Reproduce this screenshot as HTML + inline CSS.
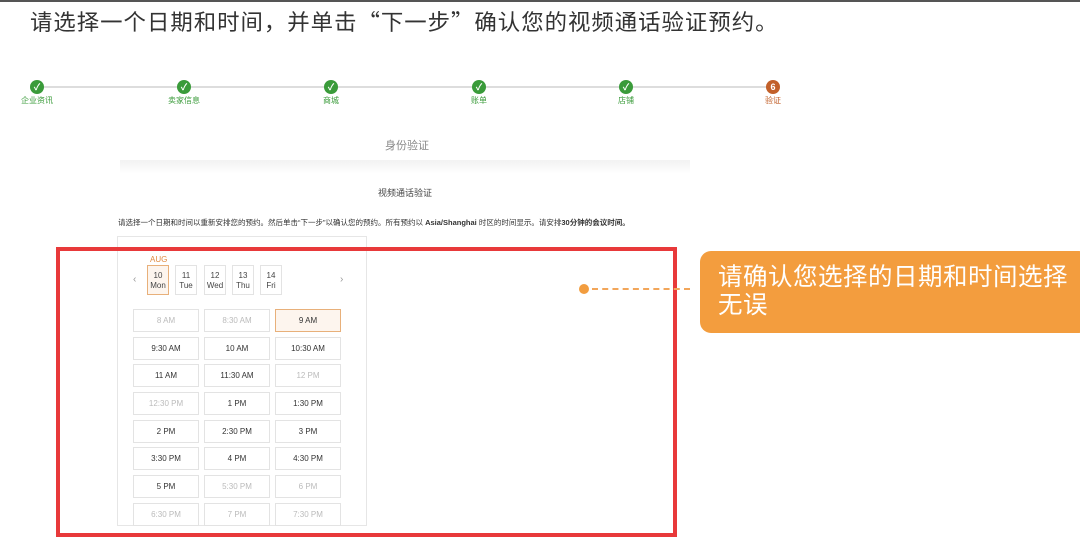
<!DOCTYPE html><html><head><meta charset="utf-8"><style>
*{margin:0;padding:0;box-sizing:border-box}
body{width:1080px;height:520px;overflow:hidden;background:#fff;font-family:"Liberation Sans","Noto Sans CJK SC",sans-serif;position:relative}
.a{position:absolute}
.title{left:30px;top:5px;font-size:22.4px;letter-spacing:1px;color:#333;white-space:nowrap;font-family:"Noto Sans CJK SC",sans-serif}
.line{left:37px;top:86px;width:736px;height:2px;background:#ddd}
.c{width:14px;height:14px;border-radius:50%;background:#3a9b3a;top:80px;color:#fff;font-size:9px;text-align:center;line-height:14px;font-weight:bold}
.l{top:95px;font-size:8px;color:#3a9b3a;transform:translateX(-50%);white-space:nowrap}
.t{border:1px solid #e3e3e3;width:66px;height:23px;font-size:8px;color:#333;text-align:center;line-height:21px}
.t.g{color:#bbb}
.d{border:1px solid #e3e3e3;width:22px;height:30px;font-size:8px;color:#444;text-align:center;line-height:10px;padding-top:5px;top:265px}
</style></head><body>
<div class="a" style="left:0;top:0;width:1080px;height:2px;background:#555"></div>
<div class="a title">请选择一个日期和时间，并单击“下一步”确认您的视频通话验证预约。</div>
<div class="a line"></div>
<div class="a c" style="left:30px">✓</div><div class="a c" style="left:177px">✓</div><div class="a c" style="left:324px">✓</div><div class="a c" style="left:472px">✓</div><div class="a c" style="left:619px">✓</div><div class="a c" style="left:766px;background:#c2602a">6</div>
<div class="a l" style="left:37px">企业资讯</div><div class="a l" style="left:184px">卖家信息</div><div class="a l" style="left:331px">商城</div><div class="a l" style="left:479px">账单</div><div class="a l" style="left:626px">店铺</div><div class="a l" style="left:773px;color:#c2602a">验证</div>
<div class="a" style="left:385px;top:137px;font-size:11px;color:#888">身份验证</div>
<div class="a" style="left:120px;top:160px;width:570px;height:14px;background:linear-gradient(#f2f2f2,#fff)"></div>
<div class="a" style="left:378px;top:186px;font-size:9px;color:#444">视频通话验证</div>
<div class="a" style="left:118px;top:217px;font-size:7.5px;color:#333;white-space:nowrap">请选择一个日期和时间以重新安排您的预约。然后单击“下一步”以确认您的预约。所有预约以 <b>Asia/Shanghai</b> 时区的时间显示。请安排<b>30分钟的会议时间。</b></div>
<div class="a" style="left:117px;top:236px;width:250px;height:290px;border:1px solid #e6e6e6"></div>
<div class="a" style="left:150px;top:255px;font-size:8px;color:#e08a40">AUG</div>
<div class="a" style="left:133px;top:274px;font-size:10px;color:#999">‹</div>
<div class="a" style="left:340px;top:274px;font-size:10px;color:#999">›</div>
<div class="a d" style="left:147px;border-color:#e8b07a;background:#fdf5ee">10<br>Mon</div>
<div class="a d" style="left:175px">11<br>Tue</div>
<div class="a d" style="left:204px">12<br>Wed</div>
<div class="a d" style="left:232px">13<br>Thu</div>
<div class="a d" style="left:260px">14<br>Fri</div>
<div class="a t g" style="left:133px;top:309px">8 AM</div><div class="a t g" style="left:204px;top:309px">8:30 AM</div><div class="a t" style="left:275px;top:309px;border-color:#e8b07a;background:#fdf5ee">9 AM</div>
<div class="a t" style="left:133px;top:337px">9:30 AM</div><div class="a t" style="left:204px;top:337px">10 AM</div><div class="a t" style="left:275px;top:337px">10:30 AM</div>
<div class="a t" style="left:133px;top:364px">11 AM</div><div class="a t" style="left:204px;top:364px">11:30 AM</div><div class="a t g" style="left:275px;top:364px">12 PM</div>
<div class="a t g" style="left:133px;top:392px">12:30 PM</div><div class="a t" style="left:204px;top:392px">1 PM</div><div class="a t" style="left:275px;top:392px">1:30 PM</div>
<div class="a t" style="left:133px;top:420px">2 PM</div><div class="a t" style="left:204px;top:420px">2:30 PM</div><div class="a t" style="left:275px;top:420px">3 PM</div>
<div class="a t" style="left:133px;top:447px">3:30 PM</div><div class="a t" style="left:204px;top:447px">4 PM</div><div class="a t" style="left:275px;top:447px">4:30 PM</div>
<div class="a t" style="left:133px;top:475px">5 PM</div><div class="a t g" style="left:204px;top:475px">5:30 PM</div><div class="a t g" style="left:275px;top:475px">6 PM</div>
<div class="a t g" style="left:133px;top:503px">6:30 PM</div><div class="a t g" style="left:204px;top:503px">7 PM</div><div class="a t g" style="left:275px;top:503px">7:30 PM</div>
<div class="a" style="left:56px;top:247px;width:621px;height:290px;border:4px solid #e8393a"></div>
<div class="a" style="left:579px;top:284px;width:10px;height:10px;border-radius:50%;background:#f29d3f"></div>
<div class="a" style="left:592px;top:288px;width:98px;border-top:2px dashed #f2a65a"></div>
<div class="a" style="left:700px;top:251px;width:390px;height:82px;border-radius:11px;background:#f39d3e;color:#fff;font-size:24.5px;letter-spacing:0.5px;line-height:28px;padding:11px 0 0 18px;font-family:'Noto Sans CJK SC',sans-serif;white-space:nowrap">请确认您选择的日期和时间选择<br>无误</div>
</body></html>
